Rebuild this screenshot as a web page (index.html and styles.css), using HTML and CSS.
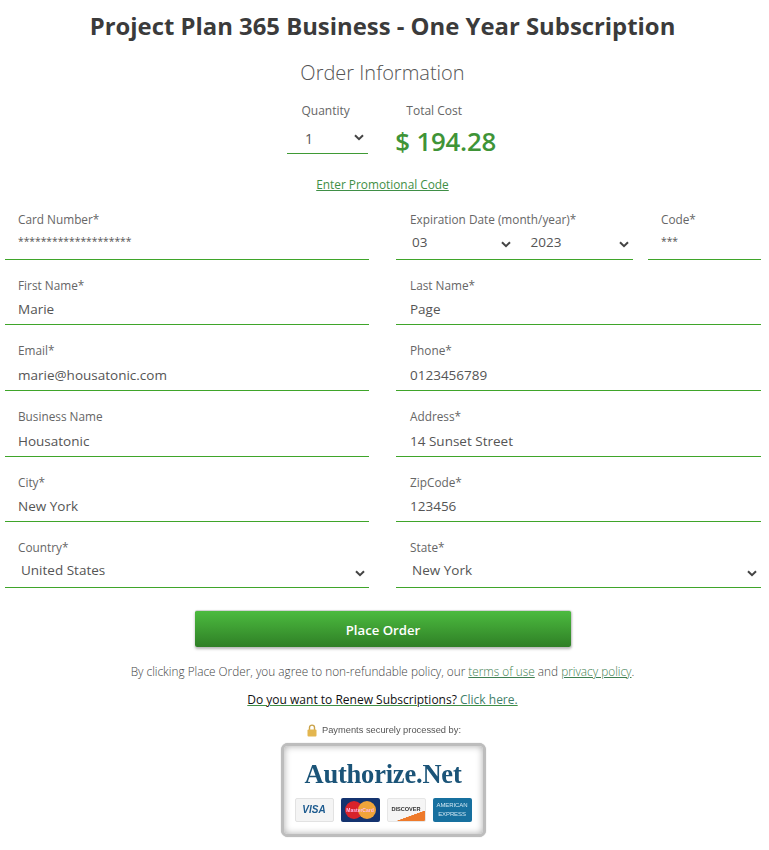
FILE: index.html
```html
<!DOCTYPE html>
<html lang="en">
<head>
<meta charset="utf-8">
<title>Project Plan 365 Business - One Year Subscription</title>
<link rel="stylesheet" href="styles.css">
</head>
<body>
<svg class="defs" width="0" height="0" aria-hidden="true"><symbol id="chev" viewBox="0 0 10 7"><path d="M1 1.2 5 5.2 9 1.2" fill="none" stroke="#444" stroke-width="2"/></symbol></svg>
<main class="page">
  <h1 class="title">Project Plan 365 Business - One Year Subscription</h1>
  <h2 class="subtitle">Order Information</h2>
  <div class="summary">
    <div class="qty">
      <div class="summary-label">Quantity</div>
      <div class="qty-select"><span>1</span><svg class="chev"><use href="#chev"/></svg></div>
    </div>
    <div class="total">
      <div class="summary-label">Total Cost</div>
      <div class="price">$ 194.28</div>
    </div>
  </div>
  <a class="promo" href="#">Enter Promotional Code</a>
  <form class="form">
    <div class="field"><label>Card Number*</label><div class="value mask">********************</div></div>
    <div class="card-extra">
      <div class="field exp">
        <label>Expiration Date (month/year)*</label>
        <div class="exp-row">
          <div class="value sel month"><span>03</span><svg class="chev"><use href="#chev"/></svg></div>
          <div class="value sel year"><span>2023</span><svg class="chev"><use href="#chev"/></svg></div>
        </div>
      </div>
      <div class="field code"><label>Code*</label><div class="value mask">***</div></div>
    </div>
    <div class="field"><label>First Name*</label><div class="value">Marie</div></div>
    <div class="field"><label>Last Name*</label><div class="value">Page</div></div>
    <div class="field"><label>Email*</label><div class="value">marie@housatonic.com</div></div>
    <div class="field"><label>Phone*</label><div class="value">0123456789</div></div>
    <div class="field"><label>Business Name</label><div class="value">Housatonic</div></div>
    <div class="field"><label>Address*</label><div class="value">14 Sunset Street</div></div>
    <div class="field"><label>City*</label><div class="value">New York</div></div>
    <div class="field"><label>ZipCode*</label><div class="value">123456</div></div>
    <div class="field"><label>Country*</label><div class="value sel wide"><span>United States</span><svg class="chev"><use href="#chev"/></svg></div></div>
    <div class="field"><label>State*</label><div class="value sel wide"><span>New York</span><svg class="chev"><use href="#chev"/></svg></div></div>
  </form>
  <button class="order" type="button">Place Order</button>
  <p class="terms">By clicking Place Order, you agree to non-refundable policy, our <a href="#">terms of use</a> and <a href="#">privacy policy</a>.</p>
  <p class="renew"><a href="#">Do you want to Renew Subscriptions? <span>Click here.</span></a></p>
  <div class="secure">
    <div class="secure-line">
      <svg class="lock" viewBox="0 0 10 13"><path d="M2.5 6V3.6a2.5 2.5 0 0 1 5 0V6" fill="none" stroke="#c9a24a" stroke-width="1.4"/><rect x="0.5" y="5.5" width="9" height="7" rx="1" fill="#e3b64f"/></svg>
      <span>Payments securely processed by:</span>
    </div>
    <div class="badge">
      <div class="brand">Authorize.Net</div>
      <div class="cards">
        <div class="card visa">VISA</div>
        <div class="card mc"><i class="mc-r"></i><i class="mc-y"></i><b>MasterCard</b></div>
        <div class="card disc">DISCOVER</div>
        <div class="card amex">AMERICAN<br>EXPRESS</div>
      </div>
    </div>
  </div>
</main>
</body>
</html>
```
FILE: styles.css
```css
* { box-sizing: border-box; }
html, body { margin: 0; background: #fff; }
body { font-family: "Open Sans", "Noto Sans", sans-serif; color: #555; }
.defs { position: absolute; }
.page { width: 769px; height: 850px; overflow: hidden; display: flex; flex-direction: column; align-items: center; }
.title { margin: 11px 0 0 -4px; height: 30px; font-size: 23.87px; line-height: 30px; font-weight: 700; color: #3b3b3b; white-space: nowrap; }
.subtitle { margin: 17px 0 0 -4px; height: 30px; font-size: 20px; line-height: 30px; font-weight: 300; color: #555; }
.summary { display: flex; margin-top: 14px; width: 209px; margin-left: 14px; }
.summary-label { font-size: 12px; line-height: 18px; text-align: center; color: #666; }
.qty { width: 82px; }
.qty > .summary-label { padding-right: 4px; }
.qty-select { height: 26px; margin-top: 8px; padding: 0 4px 4px 18px; border-bottom: 1px solid #3f9a35; display: flex; align-items: center; justify-content: space-between; font-size: 14px; color: #555; }
.total { margin-left: 27px; }
.total .summary-label { text-align: left; margin-left: 11px; }
.price { margin-top: 4px; font-size: 25.8px; line-height: 34px; font-weight: 600; color: #3f9437; white-space: nowrap; letter-spacing: -0.2px; }
.promo { margin: 17px 0 0 -4px; font-size: 11.85px; line-height: 18px; color: #3f8f46; text-decoration: underline; }
.form { align-self: stretch; margin: 1px 8px 0 5px; display: grid; grid-template-columns: 364px 365px; column-gap: 27px; }
.field { min-width: 0; height: 65.7px; display: flex; flex-direction: column; }
.field label { height: 18px; margin-top: 16px; padding-left: 13px; font-size: 11.8px; line-height: 18px; color: #666; white-space: nowrap; }
.form > :nth-child(even) > label, .exp > label { padding-left: 14px; }
.code > label { padding-left: 13px; }
.value { flex: 1; padding: 5.5px 14px 0 13px; border-bottom: 1px solid #3fa52a; font-size: 13.5px; line-height: 20px; color: #555; white-space: nowrap; }
.form > :nth-child(even) > .value:not(.sel) { padding-left: 14px; }
.mask { font-size: 10.3px; padding-top: 3px; }
.card-extra { display: flex; gap: 15px; }
.exp { width: 237px; }
.code { flex: 1; }
.exp-row { flex: 1; display: flex; border-bottom: 1px solid #3fa52a; }
.sel { display: flex; justify-content: space-between; align-items: flex-start; padding: 4px 0 0 16px; border-bottom: 0; }
.month { width: 118px; padding-right: 3px; }
.year { flex: 1; padding: 4px 4px 0 17px; }
.wide { border-bottom: 1px solid #3fa52a; padding-right: 4px; }
.chev { width: 10px; height: 7px; flex: none; }
.month .chev, .year .chev { margin-top: 9px; }
.wide .chev { margin-top: 10px; }
.qty-select .chev { margin-top: -2px; }
.order { margin-top: 22px; margin-left: -3px; width: 376px; height: 37px; border: 0; border-top: 1px solid #d4d4d4; border-radius: 2px; background: linear-gradient(#4cbb3f, #2f7f26); box-shadow: 0 2px 3px #bbb, 1px 1px 2px #ccc; color: #fff; font: 600 13.2px/36px "Open Sans", sans-serif; }
.terms { margin: 15px 0 0 -4px; font-size: 11.8px; line-height: 18px; font-weight: 300; color: #444; white-space: nowrap; }
.terms a { color: #3f7f52; }
.renew { margin: 11px 0 0 -4px; font-size: 12px; line-height: 18px; white-space: nowrap; }
.renew a { color: #111; text-decoration-color: #3f8f46; }
.renew span { color: #3f7f6a; }
.secure { margin-top: 14px; display: flex; flex-direction: column; align-items: center; margin-left: -3px; filter: blur(0.4px); }
.secure-line { display: flex; align-items: center; gap: 5px; height: 14px; margin-left: 2px; font: 9.3px/14px "Liberation Sans", Arial, sans-serif; color: #555; }
.lock { width: 10px; height: 13px; }
.badge { margin-top: 6px; width: 205px; height: 94px; border-radius: 7px; background: #fff; border: 3px solid #bdbdbd; box-shadow: inset 0 0 7px #aaa, 0 0 1px #aaa; display: flex; flex-direction: column; align-items: center; }
.brand { margin-top: 12px; font: 700 26.5px/32px "Liberation Serif", "Times New Roman", serif; letter-spacing: -0.2px; color: #1b5478; white-space: nowrap; }
.cards { margin-top: 8px; display: flex; gap: 7px; }
.card { position: relative; width: 39px; height: 24px; border-radius: 2px; overflow: hidden; font-family: "Liberation Sans", Arial, sans-serif; text-align: center; }
.visa { background: #f4f4f4; border: 1px solid #e2e2e2; font-size: 10px; line-height: 22px; font-weight: 700; font-style: italic; color: #1d5b8f; }
.mc { background: #14336f; }
.mc i { position: absolute; top: 3px; width: 18px; height: 18px; border-radius: 50%; }
.mc-r { left: 4px; background: #d8222a; }
.mc-y { right: 4px; background: #f0a43a; }
.mc b { position: absolute; left: 0; right: 0; top: 8px; font-size: 5px; line-height: 8px; color: #fbe; }
.disc { background: linear-gradient(160deg, #f5f5f5 70%, #ee7a2b 71%); border: 1px solid #e6e6e6; font-size: 5.6px; line-height: 20px; font-weight: 700; color: #333; }
.amex { background: #17709f; font-size: 6px; line-height: 9px; padding-top: 3px; color: #cfe6f2; white-space: nowrap; letter-spacing: -0.1px; }
```
